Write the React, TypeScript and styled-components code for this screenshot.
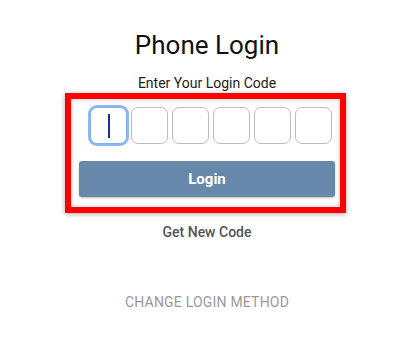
import React from "react";
import styled, { createGlobalStyle } from "styled-components";

const Global = createGlobalStyle`
  html, body { margin: 0; padding: 0; background: #ffffff; }
  body { font-family: Roboto, "Noto Sans", Arial, sans-serif; }
`;

const Page = styled.div`
  width: 414px;
  height: 350px;
  display: flex;
  flex-direction: column;
  padding-top: 30px;
  box-sizing: border-box;
`;

const Title = styled.h1`
  margin: 0;
  font-size: 26px;
  line-height: 30px;
  font-weight: 400;
  color: #111;
  text-align: center;
`;

const Subtitle = styled.div`
  margin-top: 15px;
  font-size: 14px;
  line-height: 17px;
  color: #222;
  text-align: center;
`;

const Card = styled.div`
  margin: 1px 0 0 65px;
  width: 281px;
  box-sizing: border-box;
  border: 6px solid #ff0000;
  box-shadow: 0 1px 5px rgba(0, 0, 0, 0.35), inset 0 0 4px rgba(0, 0, 0, 0.25);
  padding: 8px 5px 10px 8px;
  display: flex;
  flex-direction: column;
`;

const CodeRow = styled.div`
  display: flex;
  gap: 4px;
  padding-left: 11px;
`;

const CodeBox = styled.div<{ $focused?: boolean }>`
  width: 37px;
  height: 37px;
  box-sizing: border-box;
  border-radius: 7px;
  border: 1px solid ${(p) => (p.$focused ? "#7fb0ee" : "#bcbcbc")};
  box-shadow: ${(p) => (p.$focused ? "0 0 0 2px #8ab8f2" : "none")};
  background: #fff;
  display: flex;
  align-items: center;
  justify-content: center;
`;

const Caret = styled.div`
  width: 2px;
  height: 24px;
  background: #1b2aa8;
`;

const LoginButton = styled.button`
  margin-top: 17px;
  width: 256px;
  height: 36px;
  border: none;
  border-radius: 3px;
  background: #6788a8;
  color: #fff;
  font-family: Roboto, "Noto Sans", Arial, sans-serif;
  font-size: 15px;
  font-weight: 700;
  box-shadow: 0 1px 2px rgba(0, 0, 0, 0.25);
  padding: 0;
`;

const LinkText = styled.div<{ $muted?: boolean; $top: number }>`
  margin-top: ${(p) => p.$top}px;
  font-size: 14px;
  line-height: 17px;
  text-align: center;
  color: ${(p) => (p.$muted ? "#9a9a9a" : "#555")};
  font-weight: ${(p) => (p.$muted ? 400 : 500)};
  letter-spacing: ${(p) => (p.$muted ? "0.2px" : "0")};
`;

export default function App() {
  return (
    <>
      <Global />
      <Page>
        <Title>Phone Login</Title>
        <Subtitle>Enter Your Login Code</Subtitle>
        <Card>
          <CodeRow>
            {Array.from({ length: 6 }).map((_, i) => (
              <CodeBox key={i} $focused={i === 0}>
                {i === 0 && <Caret />}
              </CodeBox>
            ))}
          </CodeRow>
          <LoginButton>Login</LoginButton>
        </Card>
        <LinkText $top={11}>Get New Code</LinkText>
        <LinkText $top={53} $muted>
          CHANGE LOGIN METHOD
        </LinkText>
      </Page>
    </>
  );
}
